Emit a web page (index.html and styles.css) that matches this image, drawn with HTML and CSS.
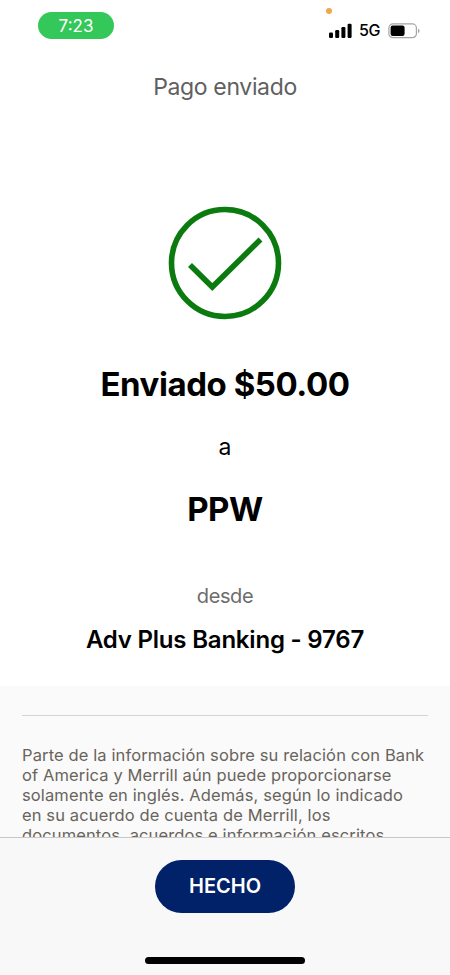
FILE: index.html
```
<!DOCTYPE html>
<html lang="es">
<head>
    <meta charset="UTF-8">
    <meta name="viewport" content="width=device-width, initial-scale=1.0">
    <title>Pago enviado</title>
    <link rel="stylesheet" href="styles.css">
</head>
<body>
    <div class="screen">
        <div class="status-bar">
            <span class="time">7:23</span>
            <div class="status-icons">
                <span class="mic-dot"></span>
                <svg class="signal" width="23" height="15" viewBox="0 0 23 15">
                    <rect x="0" y="9.5" width="4" height="5.5" rx="1.2"/>
                    <rect x="6.2" y="7" width="4" height="8" rx="1.2"/>
                    <rect x="12.4" y="4" width="4" height="11" rx="1.2"/>
                    <rect x="18.6" y="0.7" width="4" height="14.3" rx="1.2"/>
                </svg>
                <span class="network">5G</span>
                <svg class="battery" width="33" height="16" viewBox="0 0 33 16">
                    <rect x="0.9" y="0.9" width="27.5" height="13.8" rx="4" fill="none" stroke="#a5a5a5" stroke-width="1.2"/>
                    <rect x="2.6" y="2.6" width="14" height="10.4" rx="2.2"/>
                    <path d="M30 5.7c2 .7 2 3.7 0 4.4z" fill="#a5a5a5"/>
                </svg>
            </div>
        </div>

        <h1 class="page-title">Pago enviado</h1>

        <div class="content">
            <div class="confirmation">
                <svg class="check" width="114" height="114" viewBox="0 0 114 114">
                    <circle cx="57" cy="57" r="53.5"/>
                    <path d="M22 59 44.3 81 92.5 33.5"/>
                </svg>
                <h2 class="amount">Enviado $50.00</h2>
                <p class="to">a</p>
                <h2 class="recipient">PPW</h2>
                <p class="from">desde</p>
                <p class="account">Adv Plus Banking - 9767</p>
            </div>
            <div class="disclosure">
                <p class="disclosure-text">
                    <span>Parte de la información sobre su relación con Bank</span><br>
                    <span>of America y Merrill aún puede proporcionarse</span><br>
                    <span>solamente en inglés. Además, según lo indicado</span><br>
                    <span>en su acuerdo de cuenta de Merrill, los</span><br>
                    <span>documentos, acuerdos e información escritos</span>
                </p>
            </div>
        </div>

        <div class="footer">
            <button type="button" class="btn">HECHO</button>
            <div class="home-bar"></div>
        </div>
    </div>
</body>
</html>
```
FILE: styles.css
```
* {
    box-sizing: border-box;
}

body {
    font-family: Inter, "Liberation Sans", sans-serif;
    background-color: #fff;
    color: #000;
    margin: 0;
}

h1, h2, p {
    margin: 0;
}

.screen {
    display: flex;
    flex-direction: column;
    height: 975px;
    max-width: 450px;
    overflow: hidden;
}

.status-bar {
    display: flex;
    justify-content: space-between;
    align-items: flex-start;
    height: 60px;
    padding: 12px 29px 0 38px;
}

.time {
    width: 76px;
    height: 27px;
    border-radius: 14px;
    background-color: #34c759;
    color: #fff;
    font-size: 17px;
    line-height: 28px;
    text-align: center;
}

.status-icons {
    position: relative;
    display: flex;
    align-items: center;
    padding-top: 10px;
}

.mic-dot {
    position: absolute;
    top: -4px;
    left: -3px;
    width: 6px;
    height: 6px;
    border-radius: 50%;
    background-color: #f0a848;
}

.network {
    width: 22px;
    margin: 0 7px;
    font-size: 16px;
    font-weight: 500;
    line-height: 17px;
    letter-spacing: -0.3px;
}

.page-title {
    font-size: 23px;
    font-weight: 400;
    line-height: 54px;
    letter-spacing: -0.35px;
    color: #606060;
    text-align: center;
}

.content {
    flex: 1;
    min-height: 0;
    overflow: hidden;
}

.confirmation {
    display: flex;
    flex-direction: column;
    align-items: center;
    height: 572px;
    padding-top: 92px;
}

.check {
    fill: none;
    stroke: #0b7b0f;
    stroke-width: 5.6;
}

.amount,
.recipient {
    font-size: 33px;
    font-weight: 700;
    line-height: 40px;
    letter-spacing: -0.45px;
}

.amount {
    margin-top: 44px;
}

.to {
    margin-top: 27px;
    font-size: 23px;
    line-height: 32px;
}

.recipient {
    margin-top: 26px;
}

.from {
    margin-top: 55px;
    font-size: 20px;
    line-height: 24px;
    letter-spacing: -0.4px;
    color: #6c6c6c;
}

.account {
    margin-top: 17px;
    font-size: 24px;
    font-weight: 600;
    line-height: 30px;
    letter-spacing: -0.2px;
}

.disclosure {
    padding: 29px 22px 0;
    background-color: #fafafa;
}

.disclosure-text {
    padding-top: 29px;
    border-top: 1px solid #d4d4d4;
    font-size: 16.5px;
    line-height: 20px;
    letter-spacing: 0.12px;
    color: #69645c;
    white-space: nowrap;
}

.footer {
    display: flex;
    flex-direction: column;
    align-items: center;
    height: 138px;
    padding-top: 22px;
    border-top: 1px solid #c8c8c8;
    background-color: #f8f8f8;
}

.btn {
    width: 140px;
    height: 53px;
    padding: 0 0 1px;
    border: none;
    border-radius: 27px;
    background-color: #012169;
    color: #fff;
    font-family: inherit;
    font-size: 20px;
    font-weight: 600;
    cursor: pointer;
}

.home-bar {
    width: 160px;
    height: 7px;
    margin-top: 44px;
    border-radius: 4px;
    background-color: #000;
}
```
